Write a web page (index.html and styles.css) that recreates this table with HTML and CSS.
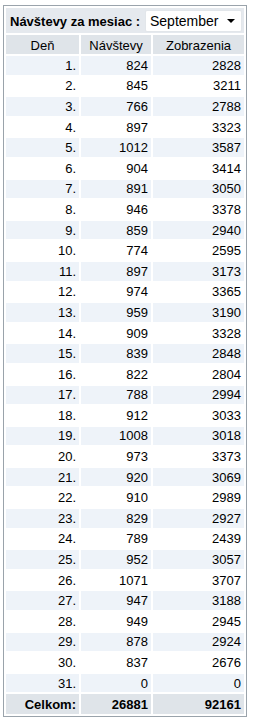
FILE: index.html
```html
<!DOCTYPE html>
<html lang="sk">
<head>
  <meta charset="UTF-8">
  <title>Návštevy</title>
  <link rel="stylesheet" href="styles.css">
</head>
<body>

  <!-- Tabulka navstev -->
  <table class="stats">
    <colgroup>
      <col class="col-day">
      <col class="col-visits">
      <col class="col-views">
    </colgroup>
    <tr class="title-row">
      <td colspan="3">
        <div class="title-box">
          <span class="title">Návštevy za mesiac :</span>
          <div class="month-select">
            <span>September</span>
            <span class="arrow"></span>
          </div>
        </div>
      </td>
    </tr>
    <tr class="head-row">
      <td>Deň</td>
      <td>Návštevy</td>
      <td>Zobrazenia</td>
    </tr>
    <tr class="odd"><td>1.</td><td>824</td><td>2828</td></tr>
    <tr><td>2.</td><td>845</td><td>3211</td></tr>
    <tr class="odd"><td>3.</td><td>766</td><td>2788</td></tr>
    <tr><td>4.</td><td>897</td><td>3323</td></tr>
    <tr class="odd"><td>5.</td><td>1012</td><td>3587</td></tr>
    <tr><td>6.</td><td>904</td><td>3414</td></tr>
    <tr class="odd"><td>7.</td><td>891</td><td>3050</td></tr>
    <tr><td>8.</td><td>946</td><td>3378</td></tr>
    <tr class="odd"><td>9.</td><td>859</td><td>2940</td></tr>
    <tr><td>10.</td><td>774</td><td>2595</td></tr>
    <tr class="odd"><td>11.</td><td>897</td><td>3173</td></tr>
    <tr><td>12.</td><td>974</td><td>3365</td></tr>
    <tr class="odd"><td>13.</td><td>959</td><td>3190</td></tr>
    <tr><td>14.</td><td>909</td><td>3328</td></tr>
    <tr class="odd"><td>15.</td><td>839</td><td>2848</td></tr>
    <tr><td>16.</td><td>822</td><td>2804</td></tr>
    <tr class="odd"><td>17.</td><td>788</td><td>2994</td></tr>
    <tr><td>18.</td><td>912</td><td>3033</td></tr>
    <tr class="odd"><td>19.</td><td>1008</td><td>3018</td></tr>
    <tr><td>20.</td><td>973</td><td>3373</td></tr>
    <tr class="odd"><td>21.</td><td>920</td><td>3069</td></tr>
    <tr><td>22.</td><td>910</td><td>2989</td></tr>
    <tr class="odd"><td>23.</td><td>829</td><td>2927</td></tr>
    <tr><td>24.</td><td>789</td><td>2439</td></tr>
    <tr class="odd"><td>25.</td><td>952</td><td>3057</td></tr>
    <tr><td>26.</td><td>1071</td><td>3707</td></tr>
    <tr class="odd"><td>27.</td><td>947</td><td>3188</td></tr>
    <tr><td>28.</td><td>949</td><td>2945</td></tr>
    <tr class="odd"><td>29.</td><td>878</td><td>2924</td></tr>
    <tr><td>30.</td><td>837</td><td>2676</td></tr>
    <tr class="odd"><td>31.</td><td>0</td><td>0</td></tr>
    <tr class="total-row">
      <td>Celkom:</td>
      <td>26881</td>
      <td>92161</td>
    </tr>
  </table>

</body>
</html>
```

FILE: styles.css
```css
* { margin: 0; padding: 0; box-sizing: border-box; }

body {
  font-family: Arial, "Liberation Sans", sans-serif;
  font-size: 13px;
  color: #000;
  background-color: #fff;
  padding: 5px 0 0 3px;
}

.stats {
  width: 244px;
  border: 1px solid #9aa3ab;
  border-spacing: 2px;
  table-layout: fixed;
}

.col-day { width: 73px; }
.col-visits { width: 70px; }

.stats td {
  height: 18.6px;
  padding: 0 3px;
  text-align: right;
  line-height: 15px;
}

.odd td { background-color: #eef3f9; }

/* hlavicka */
.title-row td {
  background-color: #e5e9ee;
  height: 25px;
  padding: 1px 2px 0 4px;
  text-align: left;
}

.title-box {
  display: flex;
  align-items: center;
  justify-content: space-between;
}

.title {
  font-weight: bold;
}

.month-select {
  display: flex;
  align-items: center;
  justify-content: space-between;
  width: 97px;
  height: 22px;
  padding: 0 6px 0 4px;
  background-color: #fff;
  border: 1px solid #e2e6ea;
  border-radius: 2px;
  font-size: 14px;
}

.arrow {
  width: 0;
  height: 0;
  border-left: 4px solid transparent;
  border-right: 4px solid transparent;
  border-top: 4px solid #000;
}

.head-row td {
  background-color: #dfe4e9;
  text-align: center;
  height: 19px;
  padding-top: 1px;
}

.total-row td {
  background-color: #dfe4e9;
  font-weight: bold;
  height: 20px;
}
```
